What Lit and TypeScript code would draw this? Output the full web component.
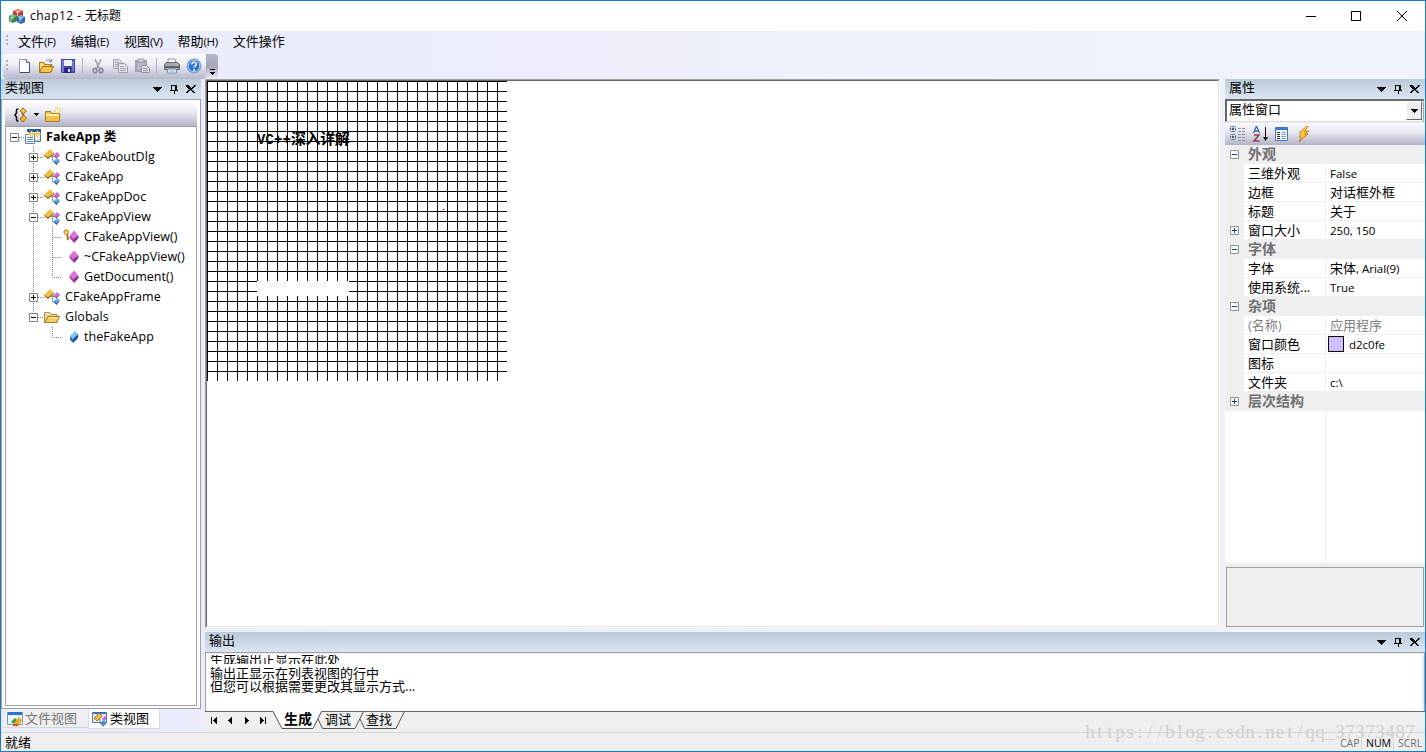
import { LitElement, html, css, svg, nothing } from "lit";
import { customElement } from "lit/decorators.js";
import { classMap } from "lit/directives/class-map.js";

const icon = (content, w = 16, h = 16) =>
  html`<svg width=${w} height=${h} viewBox="0 0 ${w} ${h}">${content}</svg>`;

const icons = {
  app: svg`
    <path d="M4 3l5-2 5 2v6l-5 2-5-2z" fill="#c8342c"/><path d="M4 3l5-2 5 2-5 2z" fill="#ef8377"/>
    <path d="M0 8l4-2 4 2v5l-4 2-4-2z" fill="#2f8747"/><path d="M0 8l4-2 4 2-4 2z" fill="#83bf86"/>
    <path d="M8 9l4-2 4 2v5l-4 2-4-2z" fill="#2a67ab"/><path d="M8 9l4-2 4 2-4 2z" fill="#80b9e3"/>
    <path d="M7 4h3M8.500 4v4M2 9v4M2 10h3M10 11h3M11 12v2" stroke="#fff" fill="none" stroke-width=".8"/>`,
  blank: svg`<path d="M3.500 1.500h7l3 3v10h-10z" fill="#fcfdff" stroke="#8d98ad"/><path d="M4 14.500h9.500V5" fill="none" stroke="#3c506d"/><path d="M10.500 1.500v3h3" fill="#d7e2f0" stroke="#536783"/>`,
  open: svg`<path d="M1 14V4h5l1 2h7v8z" fill="#b77b16"/><path d="M1.500 13V4.500h4l1 2h6v3z" fill="#f9da7e" stroke="#ad791d"/><path d="M1.500 14.500l3-6h11l-3 6z" fill="#f6c64e" stroke="#a46d13"/><path d="M8 3c2-2 4-2 5 1m-2-1l2 1 1-3" fill="none" stroke="#6884a1"/>`,
  folder: svg`<path d="M.5 13.500v-10h5l1.500 2h6v8z" fill="#f0d58a" stroke="#a98a43"/><path d="M1 4.500h4" stroke="#fff6cf"/><path d="M1 13.500l3-6h11.500l-3 6z" fill="#f8cf62" stroke="#9c7a2e"/><path d="M5 8.500h9" stroke="#ffedaa"/>`,
  save: svg`<path d="M1 1h14v14H2l-1-1z" fill="#4346af"/><path d="M2 2h2v12H2zM12 3h2v10h-2z" fill="#7478d2"/><path d="M4 2h8v6H4z" fill="#edf2fb"/><path d="M4 10h7v5H4z" fill="#26268c"/><path d="M8 11h2v3H8z" fill="#e7e9f6"/>`,
  cut: svg`<path d="M5 1l4 9M11 1L7 10" stroke="#9293a2" stroke-width="1.500"/><path d="M5 1l4 7M11 1L8 7" stroke="#bfc0cc" stroke-width=".6"/><ellipse cx="5" cy="12.500" rx="1.800" ry="2.300" fill="none" stroke="#858797" stroke-width="1.600"/><ellipse cx="11" cy="12.500" rx="1.800" ry="2.300" fill="none" stroke="#858797" stroke-width="1.600"/>`,
  copy: svg`<path d="M1.500 1.500h6l2 2v7h-8z" fill="#dadbe4" stroke="#a6a8b7"/><path d="M3 4.500h4M3 6.500h5M3 8.500h4" stroke="#a6a8b7"/><path d="M6.500 5.500h6l3 3v6h-9z" fill="#e2e3ea" stroke="#9a9cac"/><path d="M8 8.500h4M8 10.500h6M8 12.500h6" stroke="#a6a8b7"/>`,
  paste: svg`<path d="M1 2h12v12H1z" fill="#a0a2b2"/><path d="M3 5h8v7H3z" fill="#b9bac6"/><path d="M4 1h6v3H4z" fill="#d7d8df" stroke="#9496a6"/><path d="M7.500 7.500h5l3 3v4h-8z" fill="#dddee6" stroke="#9294a5"/><path d="M9 10.500h4M9 12.500h5" stroke="#9294a5"/>`,
  print: svg`<path d="M4 1h7l1 6H4z" fill="#fff" stroke="#8996a6"/><path d="M0.500 6.500l2-2h11l2 2v5h-15z" fill="#a5aab2" stroke="#636770"/><path d="M1 8h14v2H1z" fill="#5f6672"/><path d="M4 11h8l1 4H3z" fill="#fff" stroke="#7188a1"/><path d="M5 13h6" stroke="#63aadd"/><path d="M12 7h2" stroke="#efc85a"/>`,
  help: svg`<circle cx="8" cy="8" r="7" fill="#2b72d5" stroke="#8da6ca"/><circle cx="8" cy="8" r="5.800" fill="none" stroke="#b2d3f6"/><path d="M5.800 6.500c0-3 4.500-2.900 4.500-.2 0 1.600-2.200 1.600-2.200 3.200" fill="none" stroke="#fff" stroke-width="1.600"/><path d="M7.300 11h1.700v1.700H7.300z" fill="#fff"/>`,
  braces: svg`<path d="M5.500 2H5q-1.500 0-1.500 1.500V6L2 8l1.500 2v2.500Q3.500 14 5 14h.5" fill="none" stroke="#111" stroke-width="1.600"/><path d="M10 1l3.500 3L10.500 7 7 4z" fill="#f2c552" stroke="#9d6811"/><path d="M10.500 8l3 3-3.500 4-3-3z" fill="#edb938" stroke="#9d6811"/><path d="M9 6l2 3" stroke="#9d6811" stroke-width="1.500"/>`,
  newFolder: svg`<path d="M.5 14.500v-10h5l1 2h8v8z" fill="#f3c04a" stroke="#a87a22"/><path d="M1 8h13" stroke="#fff1b1" stroke-width="2"/><path d="M12.500 0v8M8.500 4h8M10 1.500l5 5m0-5l-5 5" stroke="#f4ce3e"/><path d="M11 2.500h3v3h-3z" fill="#fffbd0"/>`,
  project: svg`<path d="M4.500.5h11v12h-11z" fill="#fff" stroke="#4b77ae"/><path d="M2 0h14v3H2z" fill="#1f57b5"/><path d="M.5 5.500h9v9h-9z" fill="#fff" stroke="#5f82ad"/><path d="M2 8.500h6M2 10.500h6M2 12.500h6" stroke="#4c84c5"/><path d="M6.500 1.500v7M3 5h7M12.500 1.500v7M9.500 5h6" stroke="#d9a02a" stroke-width="2"/><path d="M6.500 2v6M3.500 5h6M12.500 2v6M10 5h5" stroke="#ffea81"/><path d="M10 10h5v2h-5z" fill="#c5daf1"/>`,
  class: svg`<path d="M0 6l6-6 4 4-6 4z" fill="#efbe42"/><path d="M0 6l4 2 6-4v1.500L4 10 0 7z" fill="#9d7118"/><path d="M7 7.500h3M8.500 7v5.500H11" fill="none" stroke="#8a8fa0"/><path d="M10 6l3-3 2.500 2-3 3z" fill="#db68d8"/><path d="M10 6l2.500 2 3-3v1.500l-3 3L10 7.500z" fill="#913c98"/><path d="M10 12l3-3 2.500 2-3 3z" fill="#5eaaf1"/><path d="M10 12l2.500 2 3-3v1.500L12.500 16 10 13.500z" fill="#225da3"/>`,
  method: svg`<path d="M6.500 6.500l4.500-5 4.500 5-4.500 3z" fill="#dc72d7"/><path d="M6.500 6.500l4.500 3V14L6.500 9z" fill="#b04fb2"/><path d="M11 9.500l4.500-3V9L11 14z" fill="#7d2d85"/>`,
  keyMethod: svg`<path d="M4 4l1 7" stroke="#a77a18" stroke-width="2"/><circle cx="3.200" cy="3.200" r="2" fill="#fff4ad" stroke="#c69020" stroke-width="1.400"/><path d="M6.500 6.500l4.500-5 4.500 5-4.500 3z" fill="#dc72d7"/><path d="M6.500 6.500l4.500 3V14L6.500 9z" fill="#b04fb2"/><path d="M11 9.500l4.500-3V9L11 14z" fill="#7d2d85"/>`,
  variable: svg`<path d="M7 7l5-5 3 3-5 5z" fill="#7ec6f8"/><path d="M7 7l3 3v4l-3-3z" fill="#2d78cc"/><path d="M10 10l5-5v4l-5 5z" fill="#174c99"/>`,
  fileTab: svg`<path d="M.5 1.500h15v12H.5z" fill="#e9f3fc" stroke="#7798ba"/><path d="M1 1h14v3H1z" fill="#2877d2"/><path d="M4 11l4-4 2 2-3 4z" fill="#3f9c43"/><path d="M7 13l5-7 3 3-3 6z" fill="#e7ad26"/><path d="M6 13h5v2H6z" fill="#d24b24"/>`,
  classTab: svg`<path d="M.5 1.500h14v10H.5z" fill="#eaf1fa" stroke="#5075ae"/><path d="M1 1h13v2H1z" fill="#3770bd"/><path d="M2 7l5-5 3 3-5 5z" fill="#efbd3d" stroke="#a47419"/><path d="M10 8l3-3 2 2-3 3z" fill="#d35ccf"/><path d="M8 12l4-3 3 3-4 4z" fill="#4a91da"/><path d="M8 8v4h3" fill="none" stroke="#777"/>`,
  categories: svg`<rect x=".5" y=".5" width="5" height="5" rx="1" fill="#fff" stroke="#557ba6"/><rect x=".5" y="8.500" width="5" height="5" rx="1" fill="#fff" stroke="#557ba6"/><path d="M1.500 3h3M3 1.500v3M1.500 11h3M3 9.500v3" stroke="#222"/><path d="M8 2.500h3m1 0h3M8 5.500h3m1 0h3M8 8.500h3m1 0h3M8 11.500h3m1 0h3M8 14.500h3m1 0h3" stroke="#8a91a0"/>`,
  sort: svg`<path d="M1.500 7l3-7 3 7M2.500 5h4" fill="none" stroke="#4465a6" stroke-width="1.300"/><path d="M2 9h5l-5 6h5.500" fill="none" stroke="#994047" stroke-width="1.500"/><path d="M13.500 1v12" stroke="#111"/><path d="M11 11h5l-2.500 4z" fill="#111"/>`,
  sheet: svg`<path d="M1.500 1.500h12v13h-12z" fill="#fff" stroke="#3f77bf"/><path d="M2 2h11v2H2z" fill="#3a7bd5"/><path d="M3 6.500h3M3 8.500h3M3 10.500h3M3 12.500h3" stroke="#333"/><path d="M7 6.500h5M7 8.500h5M7 10.500h5M7 12.500h5" stroke="#73a8e4"/>`,
  bolt: svg`<path d="M11 0L3 7h3l-3 4h2l-2 5 9-8H9l4-3H9l3-5z" fill="#ffb31c" stroke="#bc6516" stroke-width=".7"/><path d="M11 1L5 7h3l-3 4" stroke="#ffe36b" fill="none"/>`,
};

const menus = [
  ["文件", "(F)"],
  ["编辑", "(E)"],
  ["视图", "(V)"],
  ["帮助", "(H)"],
  ["文件操作", ""],
];

// guides: one entry per indent cell
// "-" open box, "+" closed box, "|" line, "t" branch, "l" last branch, " " empty
const tree = [
  { guides: ["root"], icon: "project", label: "FakeApp 类", bold: true },
  { guides: [" ", "+"], icon: "class", label: "CFakeAboutDlg" },
  { guides: [" ", "+"], icon: "class", label: "CFakeApp" },
  { guides: [" ", "+"], icon: "class", label: "CFakeAppDoc" },
  { guides: [" ", "-"], icon: "class", label: "CFakeAppView" },
  { guides: [" ", "|", "t"], icon: "keyMethod", label: "CFakeAppView()" },
  { guides: [" ", "|", "t"], icon: "method", label: "~CFakeAppView()" },
  { guides: [" ", "|", "l"], icon: "method", label: "GetDocument()" },
  { guides: [" ", "+"], icon: "class", label: "CFakeAppFrame" },
  { guides: [" ", "last"], icon: "folder", label: "Globals" },
  { guides: [" ", " ", "l"], icon: "variable", label: "theFakeApp" },
];

const properties = [
  { group: "外观", open: true },
  { name: "三维外观", value: "False" },
  { name: "边框", value: "对话框外框" },
  { name: "标题", value: "关于" },
  { name: "窗口大小", value: "250, 150", expandable: true },
  { group: "字体", open: true },
  { name: "字体", value: "宋体, Arial(9)" },
  { name: "使用系统...", value: "True" },
  { group: "杂项", open: true },
  { name: "(名称)", value: "应用程序", disabled: true },
  { name: "窗口颜色", value: "d2c0fe", color: true },
  { name: "图标", value: "" },
  { name: "文件夹", value: "c:\\" },
  { group: "层次结构", open: false },
];

@customElement("pane-header")
class PaneHeader extends LitElement {
  static properties = { label: {} };

  static styles = css`
    :host {
      display: flex;
      align-items: center;
      box-sizing: border-box;
      flex: none;
      height: 20px;
      padding: 0 5px 0 4px;
      background: linear-gradient(#bccad8, #d9e5f2);
      font-size: 13px;
      line-height: 16px;
    }
    span {
      flex: 1;
      padding-bottom: 4px;
    }
    svg {
      display: block;
    }
  `;

  render() {
    return html`<span>${this.label}</span>
      <svg width="44" height="10" shape-rendering="crispEdges">
        <path d="M1 3h9v1H9v1H8v1H7v1H6v1H5V7H4V6H3V5H2V4H1z" />
        <path d="M19 1h6v5h1v1h-3v3h-1V7h-4V6h1zM20 2v4h3V2z" fill-rule="evenodd" />
        <path d="M35 1h2v1h1v1h1v1h1V3h1V2h1V1h2v1h-1v1h-1v1h-1v1h-1v1h1v1h1v1h1v1h-2V8h-1V7h-1V6h-1v1h-1v1h-1v1h-2V8h1V7h1V6h1V5h-1V4h-1V3h-1V2h-1z" />
      </svg>`;
  }
}

@customElement("app-root")
class AppRoot extends LitElement {
  static styles = css`
    :host {
      display: flex;
      flex-direction: column;
      position: relative;
      box-sizing: border-box;
      width: 1426px;
      height: 752px;
      overflow: hidden;
      border: 1px solid #1979ca;
      background: linear-gradient(90deg, #e9ebfa, #eff3fc 78%);
      color: #000;
      font-family: "Open Sans", "Noto Sans CJK SC", sans-serif;
      font-size: 13px;
      white-space: nowrap;
    }
    svg {
      display: block;
      flex: none;
    }
    .title {
      display: flex;
      align-items: center;
      flex: none;
      height: 30px;
      padding: 0 18px 0 8px;
      background: #fff;
      font-size: 12px;
      line-height: 16px;
    }
    .title span {
      flex: 1;
      padding-left: 5px;
    }
    .title b {
      font-weight: normal;
      letter-spacing: 0.45px;
    }
    .menu {
      display: flex;
      align-items: center;
      box-sizing: border-box;
      flex: none;
      height: 23px;
      padding: 0 0 3px 5px;
      line-height: 18px;
    }
    .menu span {
      margin-right: 15.2px;
    }
    .menu small {
      font-size: 11.5px;
      letter-spacing: -0.4px;
    }
    .grip {
      width: 2px;
      height: 12px;
      flex: none;
      margin-right: 10px;
      background: repeating-linear-gradient(#adadb8 0 2px, transparent 2px 4px);
    }
    .bar {
      display: flex;
      flex: none;
      height: 25px;
      padding-left: 2px;
    }
    .tools {
      display: flex;
      align-items: center;
      gap: 6px;
      box-sizing: border-box;
      width: 203px;
      padding: 0 0 1px 3px;
      border-radius: 4px 3px 3px 4px;
      background: linear-gradient(#fafafd, #eeeef5 40%, #b7b7cc);
    }
    .tools .grip {
      margin-right: 2px;
    }
    .sep {
      width: 1px;
      height: 16px;
      margin-right: 1px;
      background: #b2b2c1;
    }
    .overflow {
      box-sizing: border-box;
      width: 12px;
      padding: 15px 0 0 4px;
      border-radius: 0 4px 4px 0;
      background: linear-gradient(#b5b5c9, #a5a5b8 50%, #eeeef8);
    }
    .workspace {
      display: flex;
      gap: 4px;
      height: 653px;
    }
    .left {
      display: flex;
      flex-direction: column;
      width: 200px;
    }
    .frame {
      display: flex;
      flex-direction: column;
      box-sizing: border-box;
      height: 610px;
      padding: 3px 3px 2px;
      border: 1px solid #a0a0a8;
      background: #fff;
    }
    .strip {
      display: flex;
      align-items: center;
      flex: none;
      height: 23px;
      background: linear-gradient(#fafafd, #e8e8f0 40%, #b4b4c8);
    }
    .frame .strip {
      padding-left: 8px;
    }
    .tree {
      flex: 1;
      padding-top: 1px;
      box-shadow: inset 0 0 0 1px #a0a0a8;
    }
    .node {
      display: flex;
      height: 20px;
      line-height: 19px;
      font-size: 12.5px;
      letter-spacing: 0.05px;
    }
    .node .icon {
      padding: 2px 5px 0 1px;
    }
    .bold {
      font-weight: bold;
    }
    .tabs {
      display: flex;
      height: 21px;
      padding-left: 3px;
      line-height: 18px;
    }
    .tab {
      display: flex;
      box-sizing: border-box;
      height: 19px;
      width: 84px;
      padding: 0 0 0 3px;
      gap: 2px;
      background: #efeff1;
      color: #777;
      border-bottom: 1px solid #d5d5d5;
    }
    .tab svg {
      margin-top: 2px;
    }
    .tab.active {
      width: 72px;
      height: 20px;
      color: #000;
      background: #fff;
      border: 1px solid #ddd;
      border-top: 0;
    }
    .rest {
      display: flex;
      flex-direction: column;
      width: 1220px;
    }
    .upper {
      display: flex;
      gap: 5px;
      height: 553px;
    }
    .view {
      position: relative;
      box-sizing: border-box;
      width: 1015px;
      height: 549px;
      border: 1px solid #a0a0a0;
      border-right-color: #fff;
      border-bottom-color: #fff;
      background: #fff;
    }
    .client {
      box-sizing: border-box;
      height: 547px;
      border: 1px solid #696969;
      border-right-color: #e3e3e3;
      border-bottom-color: #e3e3e3;
    }
    .drawn {
      position: absolute;
      left: 51px;
      top: 52px;
      font: bold 15px/16px "Liberation Mono", "Noto Sans CJK SC", monospace;
      letter-spacing: -0.4px;
    }
    .drawn i {
      font-style: normal;
      font-size: 14px;
      letter-spacing: 0.1px;
    }
    .right {
      display: flex;
      flex-direction: column;
      width: 200px;
      height: 549px;
      background: #efefef;
    }
    .combo {
      display: flex;
      flex: none;
      box-sizing: border-box;
      height: 23px;
      margin-right: 1px;
      margin-bottom: 1px;
      padding: 0 1px 1px 2px;
      border: 1px solid #a0a0a0;
      border-top: 2px solid #696969;
      border-left: 2px solid #696969;
      border-bottom-color: #ddd;
      background: #fff;
      line-height: 17px;
    }
    .combo span {
      flex: 1;
    }
    .arrow {
      display: flex;
      align-items: center;
      justify-content: center;
      width: 14px;
      background: #f0f0f0;
      border: 1px solid #fff;
      border-right-color: #696969;
      border-bottom-color: #696969;
    }
    .right .strip {
      gap: 6px;
      padding-left: 5px;
      height: 22px;
    }
    .props {
      display: flex;
      flex-direction: column;
      height: 418px;
    }
    .prop {
      display: grid;
      grid-template-columns: 19px 81px 1fr;
      flex: none;
      height: 19px;
      line-height: 18px;
      background: #efefef;
    }
    .prop > svg {
      margin: 5px 0 0 5px;
    }
    .cell {
      box-sizing: border-box;
      padding-left: 4px;
      background: #fff;
      border-bottom: 1px solid #efefef;
    }
    .cell.value {
      display: flex;
      border-left: 1px solid #efefef;
    }
    .latin {
      font-size: 11.5px;
      line-height: 20px;
      height: 18px;
      white-space: pre;
    }
    .group {
      padding-left: 4px;
      color: #707070;
      font-weight: bold;
      font-size: 14px;
    }
    .disabled {
      color: #808080;
    }
    .swatch {
      box-sizing: border-box;
      width: 16px;
      height: 16px;
      margin: 1px 5px 0 -2px;
      border: 1px solid #000;
      background: #d2c0fe;
    }
    .filler {
      flex: 1;
      display: grid;
      grid-template-columns: 101px 1fr;
      background: #fff;
    }
    .filler i {
      border-right: 1px solid #efefef;
    }
    .description {
      box-sizing: border-box;
      height: 60px;
      margin: 4px 1px 0;
      border: 1px solid #a0a0a0;
    }
    .output {
      display: flex;
      flex-direction: column;
      height: 100px;
      background: #efefef;
    }
    .log {
      box-sizing: border-box;
      flex: none;
      height: 60px;
      padding: 2px 0 0 4px;
      border: 1px solid #a0a0a0;
      background: #fff;
      line-height: 13px;
      box-shadow: inset -2px 1px 0 #ececec;
    }
    .log div {
      height: 13px;
    }
    .log .clipped {
      display: flex;
      align-items: center;
      height: 9px;
      margin-bottom: 3px;
      overflow: hidden;
    }
    .sheets {
      display: flex;
      position: relative;
      height: 20px;
      line-height: 14px;
      border-top: 1px solid #696969;
      margin-top: -1px;
    }
    .sheets > svg {
      margin-top: 4px;
    }
    .sheets .shapes {
      position: absolute;
      left: 66px;
      top: -1px;
      margin: 0;
    }
    .sheets span {
      position: relative;
      width: 41px;
    }
    .sheets .bold {
      margin-left: 13px;
      font-size: 14px;
    }
    .status {
      display: flex;
      box-sizing: border-box;
      height: 19px;
      padding: 0 1px 0 4px;
      background: #efefef;
      border-top: 1px solid #d7d7d7;
      line-height: 18px;
    }
    .status .ready {
      flex: 1;
    }
    .status .key {
      box-sizing: border-box;
      width: 32px;
      padding-left: 4px;
      color: #707070;
      font-size: 10.5px;
      line-height: 20px;
      border-right: 1px solid #d7d7d7;
    }
    .status .key.on {
      color: #000;
    }
    .status .first {
      width: 27px;
      padding-left: 5px;
    }
    .status .last {
      border: 0;
      width: 30px;
    }
    .watermark {
      display: flex;
      position: absolute;
      left: 1084px;
      top: 719px;
      color: #d0d0cc;
      font: 19px/24px "Liberation Serif", serif;
    }
    .watermark span {
      width: 10px;
      text-align: center;
    }
  `;

  renderGuide(kind) {
    const isBox = ["root", "+", "-", "last"].includes(kind);
    const lines = {
      "|": "M9.500 0v20",
      t: "M9.500 0v20M9.500 10.500H20",
      l: "M9.500 0v10.500H20",
      root: "M14 10.500h6",
      "+": "M9.500 0v20M14 10.500h6",
      "-": "M9.500 0v20M14 10.500h6",
      last: "M9.500 0v10M14 10.500h6",
    };
    return icon(
      svg`<path d=${lines[kind] || ""} fill="none" stroke="#808080" stroke-dasharray="1 1"/>
        ${isBox
          ? svg`<path d="M5.500 6.500h8v8h-8z" fill="#fff" stroke="#848484"/>
              <path d=${kind === "+" ? "M7 10.500h5M9.500 8v5" : "M7 10.500h5"} stroke="#000"/>`
          : nothing}`,
      19,
      20
    );
  }

  renderNode(node) {
    return html`<div class=${classMap({ node: true, bold: !!node.bold })}>
      ${node.guides.map((kind) => this.renderGuide(kind))}
      <div class="icon">${icon(icons[node.icon])}</div>
      <span>${node.label}</span>
    </div>`;
  }

  renderBox(open) {
    return icon(
      svg`<path d="M.5.5h8v8h-8z" fill="#fafafa" stroke="#949494"/>
        <path d=${open ? "M2 4.500h5" : "M2 4.500h5M4.500 2v5"} stroke="#27408b"/>`,
      9,
      9
    );
  }

  // latin runs are set smaller than the ideographs
  renderValue(value) {
    const runs = value.match(/[\x00-\x7f]+|[^\x00-\x7f]+/g) || [];
    return runs.map(
      (run) => html`<span class=${classMap({ latin: run.charCodeAt(0) < 128 })}>${run}</span>`
    );
  }

  renderProperty(prop) {
    if (prop.group) {
      return html`<div class="prop">
        ${this.renderBox(prop.open)}<span class="group">${prop.group}</span>
      </div>`;
    }
    return html`<div class=${classMap({ prop: true, disabled: !!prop.disabled })}>
      ${prop.expandable ? this.renderBox(false) : html`<i></i>`}
      <div class="cell">${prop.name}</div>
      <div class="cell value">
        ${prop.color ? html`<i class="swatch"></i>` : nothing}${this.renderValue(prop.value)}
      </div>
    </div>`;
  }

  renderGrid() {
    let d = "";
    for (let i = 0; i < 300; i += 10) {
      d += `M${i} 0h1v300h-1zM0 ${i}h300v1H0z`;
    }
    return html`<svg width="300" height="300" shape-rendering="crispEdges">
      <path d=${d} />
      <path d="M50 200h92v15H50z" fill="#fff" />
      <path d="M235 128h3v1h-3zM236 127h1v3h-1z" fill="#f6c4c8" />
      <path d="M236 128h1v1h-1z" fill="#e02030" />
    </svg>`;
  }

  render() {
    return html`
      <div class="title">
        ${icon(icons.app)}<span><b>chap12 - </b>无标题</span>
        <svg width="102" height="12" fill="none" stroke="#000">
          <path d="M1 6.500h10M46.500 1.500h9v9h-9z" shape-rendering="crispEdges" />
          <path d="M92 1l10 10M102 1l-10 10" />
        </svg>
      </div>
      <div class="menu">
        <i class="grip"></i>
        ${menus.map(([name, key]) => html`<span>${name}<small>${key}</small></span>`)}
      </div>
      <div class="bar">
        <div class="tools">
          <i class="grip"></i>
          ${icon(icons.blank)} ${icon(icons.open)} ${icon(icons.save)}
          <i class="sep"></i>
          ${icon(icons.cut)} ${icon(icons.copy)} ${icon(icons.paste)}
          <i class="sep"></i>
          ${icon(icons.print)} ${icon(icons.help)}
        </div>
        <div class="overflow">
          <svg width="6" height="7" shape-rendering="crispEdges">
            <path d="M0 0h5v1H0zM0 3h5v1H4v1H3v1H2V5H1V4H0z" />
          </svg>
        </div>
      </div>
      <div class="workspace">
        <div class="left">
          <pane-header label="类视图"></pane-header>
          <div class="frame">
            <div class="strip">
              ${icon(icons.braces)}
              <svg width="16" height="6" shape-rendering="crispEdges">
                <path d="M5 1h5v1H9v1H8v1H7V3H6V2H5z" />
              </svg>
              ${icon(icons.newFolder, 17)}
            </div>
            <div class="tree">${tree.map((node) => this.renderNode(node))}</div>
          </div>
          <div class="tabs">
            <div class="tab">${icon(icons.fileTab)}文件视图</div>
            <div class="tab active">${icon(icons.classTab)}类视图</div>
          </div>
        </div>
        <div class="rest">
          <div class="upper">
            <div class="view">
              <div class="client">${this.renderGrid()}</div>
              <div class="drawn"><i>VC++</i>深入详解</div>
            </div>
            <div class="right">
              <pane-header label="属性"></pane-header>
              <div class="combo">
                <span>属性窗口</span>
                <div class="arrow">
                  <svg width="7" height="4" shape-rendering="crispEdges">
                    <path d="M0 0h7v1H6v1H5v1H4v1H3V3H2V2H1V1H0z" />
                  </svg>
                </div>
              </div>
              <div class="strip">
                ${icon(icons.categories)} ${icon(icons.sort)} ${icon(icons.sheet)}
                ${icon(icons.bolt)}
              </div>
              <div class="props">
                ${properties.map((prop) => this.renderProperty(prop))}
                <div class="filler"><i></i></div>
              </div>
              <div class="description"></div>
            </div>
          </div>
          <div class="output">
            <pane-header label="输出"></pane-header>
            <div class="log">
              <div class="clipped"><span>生成输出正显示在此处</span></div>
              <div>输出正显示在列表视图的行中</div>
              <div>但您可以根据需要更改其显示方式...</div>
            </div>
            <div class="sheets">
              <svg width="66" height="10" shape-rendering="crispEdges">
                <path d="M6 1h1v7H6zM11 1h1v7h-1V7h-1V6H9V5H8V4h1V3h1V2h1zM26 1h1v7h-1V7h-1V6h-1V5h-1V4h1V3h1V2h1zM40 1h1v1h1v1h1v1h1v1h-1v1h-1v1h-1v1h-1zM55 1h1v1h1v1h1v1h1v1h-1v1h-1v1h-1v1h-1zM60 1h1v7h-1z" />
              </svg>
              <svg class="shapes" width="140" height="19" fill="none" stroke="#555">
                <path d="M2 0L11 17.500H42L50.500 0z" fill="#fff" stroke="none" />
                <path d="M2 .5L11 17.500H42L50.500 .5M47 8l4.500 9.500H84L92.500 .5M89 8l4.500 9.500H125L133.500 .5" />
              </svg>
              <span class="bold">生成</span><span>调试</span><span>查找</span>
            </div>
          </div>
        </div>
      </div>
      <div class="status">
        <span class="ready">就绪</span>
        <span class="key first">CAP</span>
        <span class="key on">NUM</span>
        <span class="key last">SCRL</span>
      </div>
      <div class="watermark">
        ${[..."https://blog.csdn.net/qq_37373487"].map((c) => html`<span>${c}</span>`)}
      </div>
    `;
  }
}
